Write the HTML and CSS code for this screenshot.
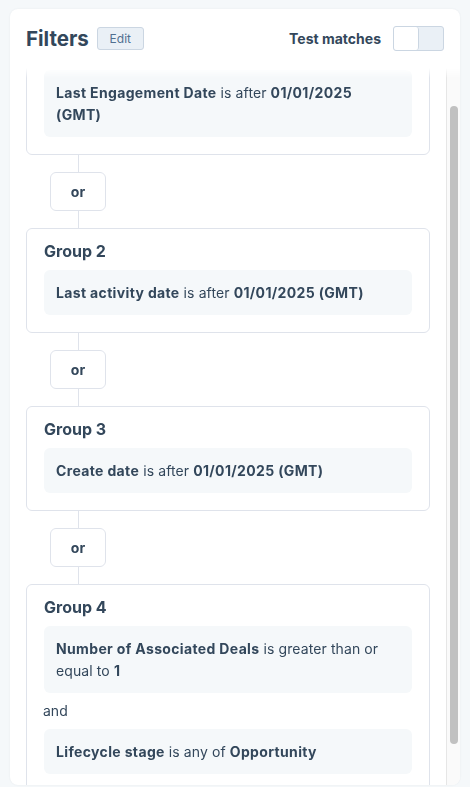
FILE: index.html
```html
<!DOCTYPE html>
<html lang="en">
<head>
    <meta charset="UTF-8">
    <meta name="viewport" content="width=device-width, initial-scale=1.0">
    <title>Filters</title>
    <link rel="stylesheet" href="styles.css">
</head>
<body>

<div class="panel">
    <header class="panel-head">
        <div class="head-left">
            <h2 class="panel-title">Filters</h2>
            <button class="edit-btn">Edit</button>
        </div>
        <div class="head-right">
            <span class="test-label">Test matches</span>
            <span class="toggle"><span class="toggle-knob"></span></span>
        </div>
    </header>

    <div class="panel-body">
        <div class="scroll-view">
            <div class="groups">
                <section class="group">
                    <h3 class="group-title">Group 1</h3>
                    <div class="rule"><b>Last Engagement Date</b> is after <b>01/01/2025 (GMT)</b></div>
                </section>

                <div class="joiner">
                    <span class="joiner-line"></span>
                    <span class="or-box">or</span>
                    <span class="joiner-line"></span>
                </div>

                <section class="group">
                    <h3 class="group-title">Group 2</h3>
                    <div class="rule"><b>Last activity date</b> is after <b>01/01/2025 (GMT)</b></div>
                </section>

                <div class="joiner">
                    <span class="joiner-line"></span>
                    <span class="or-box">or</span>
                    <span class="joiner-line"></span>
                </div>

                <section class="group">
                    <h3 class="group-title">Group 3</h3>
                    <div class="rule"><b>Create date</b> is after <b>01/01/2025 (GMT)</b></div>
                </section>

                <div class="joiner">
                    <span class="joiner-line"></span>
                    <span class="or-box">or</span>
                    <span class="joiner-line"></span>
                </div>

                <section class="group">
                    <h3 class="group-title">Group 4</h3>
                    <div class="rule"><b>Number of Associated Deals</b> is greater than or equal to <b>1</b></div>
                    <div class="and-label">and</div>
                    <div class="rule"><b>Lifecycle stage</b> is any of <b>Opportunity</b></div>
                </section>
            </div>
        </div>
        <div class="scrollbar"><div class="scroll-thumb"></div></div>
    </div>
</div>

</body>
</html>
```

FILE: styles.css
```css
body {
    margin: 0;
    height: 787px;
    overflow: hidden;
    background-color: #f5f8fa;
    font-family: Inter, "Liberation Sans", sans-serif;
    color: #33475b;
}
.panel {
    margin: 9px 10px 0;
    height: 776px;
    background-color: #fff;
    border-radius: 8px;
    box-shadow: 0 0 2px rgba(45, 62, 80, 0.08);
    display: flex;
    flex-direction: column;
    overflow: hidden;
}

/* header */
.panel-head {
    flex: none;
    height: 59px;
    padding: 0 16px;
    display: flex;
    align-items: center;
    justify-content: space-between;
}
.head-left, .head-right {
    display: flex;
    align-items: center;
}
.panel-title {
    margin: 0;
    font-size: 20.5px;
    font-weight: 700;
    line-height: normal;
}
.edit-btn {
    margin-left: 8px;
    width: 47px;
    height: 23px;
    padding: 0;
    font-family: inherit;
    font-size: 12px;
    color: #516f90;
    background-color: #eaf0f6;
    border: 1px solid #cbd6e2;
    border-radius: 3px;
}
.test-label {
    font-size: 14px;
    font-weight: 700;
    margin-right: 12px;
}
.toggle {
    display: flex;
    width: 49px;
    height: 23px;
    background-color: #eaf0f6;
    border: 1px solid #cbd6e2;
    border-radius: 3px;
}
.toggle-knob {
    width: 24px;
    background-color: #fff;
    border-right: 1px solid #cbd6e2;
    border-radius: 3px;
}

/* scrolling list */
.panel-body {
    flex: 1;
    min-height: 0;
    display: flex;
    -webkit-mask-image: linear-gradient(to bottom, transparent 0, #000 10px);
    mask-image: linear-gradient(to bottom, transparent 0, #000 10px);
}
.scroll-view {
    flex: 1;
    overflow: hidden;
    padding: 0 16px;
}
.groups {
    margin-top: -40px; /* list is scrolled down a little */
}
.group {
    border: 1px solid #dfe3eb;
    border-radius: 6px;
    padding: 11px 17px 17px;
}
.group-title {
    margin: 0 0 8px;
    font-size: 16px;
    font-weight: 700;
    line-height: 22px;
}
.rule {
    background-color: #f5f8fa;
    border-radius: 6px;
    padding: 11.5px 16px 11.5px 12px;
    font-size: 14px;
    line-height: 22px;
    letter-spacing: 0.1px;
}
.rule b {
    font-weight: 700;
    letter-spacing: 0.35px;
}
.and-label {
    margin: 7px 0 7px -1px;
    font-size: 14px;
    line-height: 22px;
}
.joiner {
    width: 56px;
    margin-left: 24px;
    display: flex;
    flex-direction: column;
    align-items: center;
}
.joiner-line {
    width: 1px;
    height: 17px;
    background-color: #dfe3eb;
}
.or-box {
    box-sizing: border-box;
    width: 56px;
    height: 39px;
    border: 1px solid #dfe3eb;
    border-radius: 6px;
    display: flex;
    align-items: center;
    justify-content: center;
    font-size: 14px;
    font-weight: 700;
}

/* fake scrollbar */
.scrollbar {
    flex: none;
    width: 13px;
    background-color: #fafafa;
    border-left: 1px solid #e6e6e6;
}
.scroll-thumb {
    width: 8px;
    height: 638px;
    margin: 38px 0 0 3px;
    border-radius: 4px;
    background-color: #c1c1c1;
}
```
